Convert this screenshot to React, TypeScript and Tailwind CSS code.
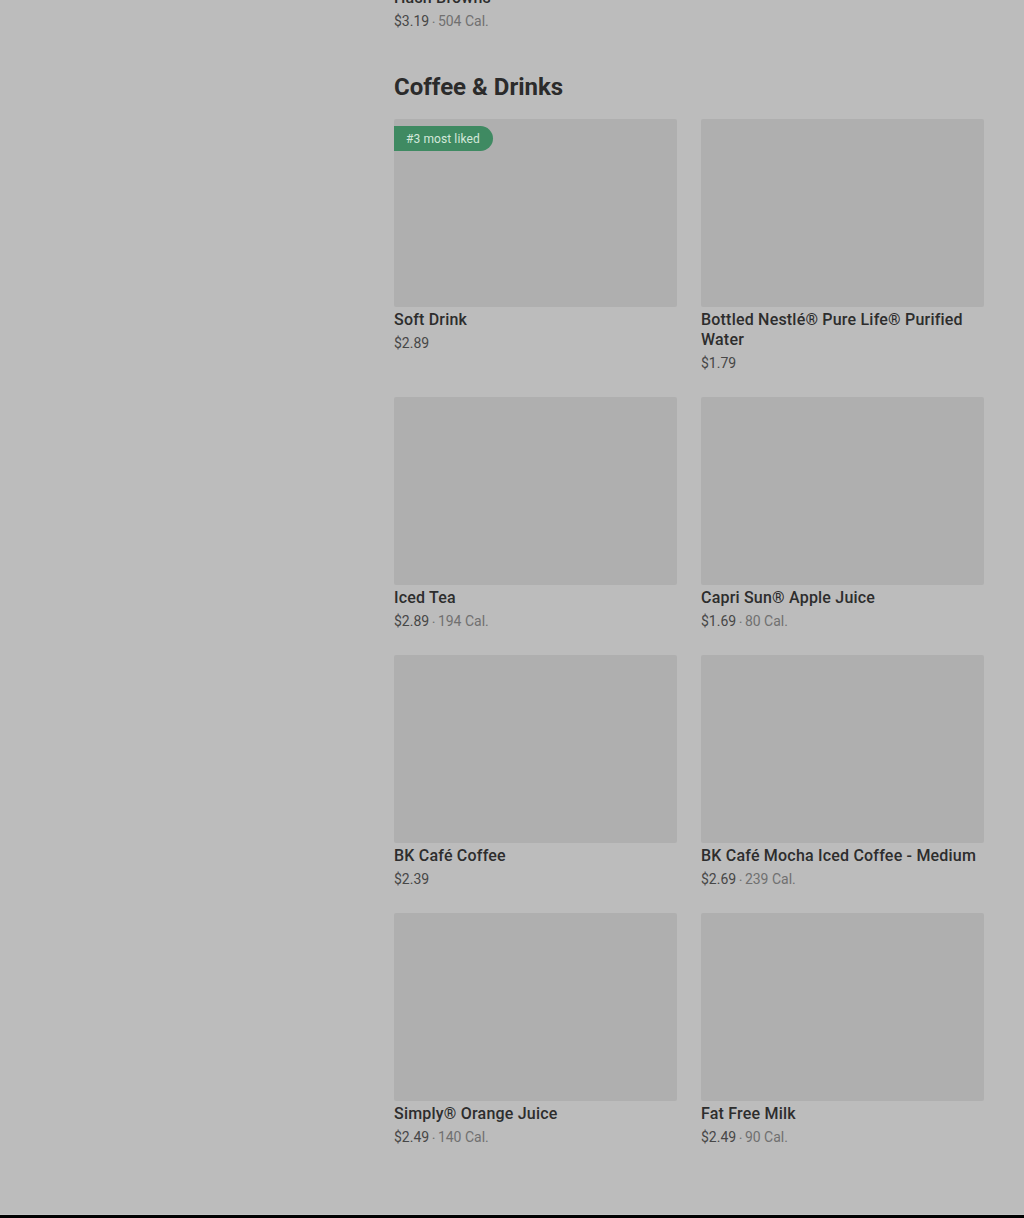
const drinks = [
  { name: "Soft Drink", price: "$2.89", badge: "#3 most liked" },
  { name: "Bottled Nestlé® Pure Life® Purified Water", price: "$1.79" },
  { name: "Iced Tea", price: "$2.89", cal: "194 Cal." },
  { name: "Capri Sun® Apple Juice", price: "$1.69", cal: "80 Cal." },
  { name: "BK Café Coffee", price: "$2.39" },
  { name: "BK Café Mocha Iced Coffee - Medium", price: "$2.69", cal: "239 Cal." },
  { name: "Simply® Orange Juice", price: "$2.49", cal: "140 Cal." },
  { name: "Fat Free Milk", price: "$2.49", cal: "90 Cal." },
];

function Price({ price, cal }: { price: string; cal?: string }) {
  return (
    <p className="mt-[3px] h-5 text-[14px] leading-5 text-[#474747]">
      {price}
      {cal && (
        <span className="text-[#707070]">
          <span className="relative -top-px mx-[3px] text-[8px] leading-none">•</span>
          {cal}
        </span>
      )}
    </p>
  );
}

export default function App() {
  return (
    <div
      className="flex h-[1218px] w-full flex-col overflow-hidden bg-[#bcbcbc]"
      style={{ fontFamily: "Roboto, 'Noto Sans', sans-serif" }}
    >
      <div className="flex flex-1">
        <div className="w-[394px] shrink-0" />
        <main className="w-[590px]">
          <div className="-mt-3">
            <h3 className="text-[16px] font-medium leading-5 tracking-[0.2px] text-[#2d2d2d]">
              Hash Browns
            </h3>
            <Price price="$3.19" cal="504 Cal." />
          </div>

          <h2 className="mt-[40px] text-[24px] font-bold leading-8 text-[#2b2b2b]">
            Coffee &amp; Drinks
          </h2>

          <section className="mt-[16px] grid grid-cols-2 gap-x-6 gap-y-6">
            {drinks.map((item) => (
              <article key={item.name}>
                <div className="relative h-[188px] rounded-[2px] bg-[#afafaf]">
                  {item.badge && (
                    <span className="absolute left-0 top-[7px] flex h-[25px] items-center rounded-r-full bg-[#3f8a62] pl-3 pr-[13px] text-[12px] tracking-[0.1px] text-[#d3e8db]">
                      {item.badge}
                    </span>
                  )}
                </div>
                <h3 className="mt-[3px] text-[16px] font-medium leading-5 tracking-[0.2px] text-[#2d2d2d]">
                  {item.name}
                </h3>
                <Price price={item.price} cal={item.cal} />
              </article>
            ))}
          </section>
        </main>
      </div>
      <div className="h-px bg-[#c4c4c4]" />
      <div className="h-[3px] shrink-0 bg-black" />
    </div>
  );
}
